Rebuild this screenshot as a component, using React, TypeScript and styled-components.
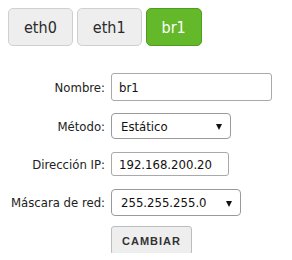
import React from "react";
import styled, { createGlobalStyle } from "styled-components";

const GlobalStyle = createGlobalStyle`
  body {
    margin: 8px;
    background: #ffffff;
    font-family: "DejaVu Sans Condensed", "DejaVu Sans", sans-serif;
    font-stretch: condensed;
    color: #222;
  }
`;

const interfaces = ["eth0", "eth1", "br1"];

const App = () => {
  const active = "br1";
  return (
    <>
      <GlobalStyle />
      <Tabs>
        {interfaces.map((name) => (
          <Tab key={name} active={name === active}>
            {name}
          </Tab>
        ))}
      </Tabs>
      <Form>
        <Label>Nombre:</Label>
        <TextInput defaultValue="br1" width={161} height={28} />

        <Label>Método:</Label>
        <SelectBox width={120} height={26}>
          <Select defaultValue="static">
            <option value="static">Estático</option>
            <option value="dhcp">DHCP</option>
          </Select>
        </SelectBox>

        <Label>Dirección IP:</Label>
        <TextInput defaultValue="192.168.200.20" width={118} height={24} />

        <Label>Máscara de red:</Label>
        <SelectBox width={130} height={27}>
          <Select defaultValue="255.255.255.0">
            <option value="255.255.255.0">255.255.255.0</option>
            <option value="255.255.0.0">255.255.0.0</option>
          </Select>
        </SelectBox>

        <span />
        <Button>CAMBIAR</Button>
      </Form>
    </>
  );
};

export default App;

const Tabs = styled.div`
  display: flex;
  gap: 4px;
`;

const Tab = styled.button<{ active?: boolean }>`
  height: 38px;
  padding: 0 15px;
  border-radius: 5px;
  font-family: inherit;
  font-stretch: condensed;
  font-size: 16px;
  border: 1px solid ${(p) => (p.active ? "#4f9c1e" : "#cfcfcf")};
  background: ${(p) => (p.active ? "#64b92a" : "#eeeeee")};
  color: ${(p) => (p.active ? "#ffffff" : "#2a2a2a")};
  cursor: pointer;
`;

const Form = styled.div`
  display: grid;
  grid-template-columns: 97px auto;
  grid-template-rows: 28px 26px 26px 27px 25px;
  column-gap: 6px;
  row-gap: 12px;
  align-items: center;
  justify-items: start;
  margin-top: 27px;
`;

const Label = styled.label`
  justify-self: end;
  font-size: 13px;
  color: #222;
`;

const TextInput = styled.input<{ width: number; height: number }>`
  box-sizing: border-box;
  width: ${(p) => p.width}px;
  height: ${(p) => p.height}px;
  padding: 0 7px;
  border: 1px solid #a9a9a9;
  border-radius: 3px;
  background: #ffffff;
  font-family: inherit;
  font-stretch: condensed;
  font-size: 13px;
  color: #111;
`;

const SelectBox = styled.div<{ width: number; height: number }>`
  position: relative;
  width: ${(p) => p.width}px;
  height: ${(p) => p.height}px;

  &::after {
    content: "";
    position: absolute;
    right: 9px;
    top: 50%;
    margin-top: -2px;
    border-left: 3px solid transparent;
    border-right: 3px solid transparent;
    border-top: 6px solid #111;
    pointer-events: none;
  }
`;

const Select = styled.select`
  box-sizing: border-box;
  width: 100%;
  height: 100%;
  appearance: none;
  padding: 0 20px 0 9px;
  border: 1px solid #9a9a9a;
  border-radius: 4px;
  background: #ffffff;
  font-family: inherit;
  font-stretch: condensed;
  font-size: 13px;
  color: #111;
`;

const Button = styled.button`
  box-sizing: border-box;
  width: 81px;
  height: 29px;
  padding: 0;
  border: 1px solid #bdbdbd;
  border-radius: 3px;
  background: #eeeeee;
  font-family: "Liberation Sans", Arial, sans-serif;
  font-weight: bold;
  font-size: 11px;
  letter-spacing: 1px;
  color: #333;
  cursor: pointer;
`;
